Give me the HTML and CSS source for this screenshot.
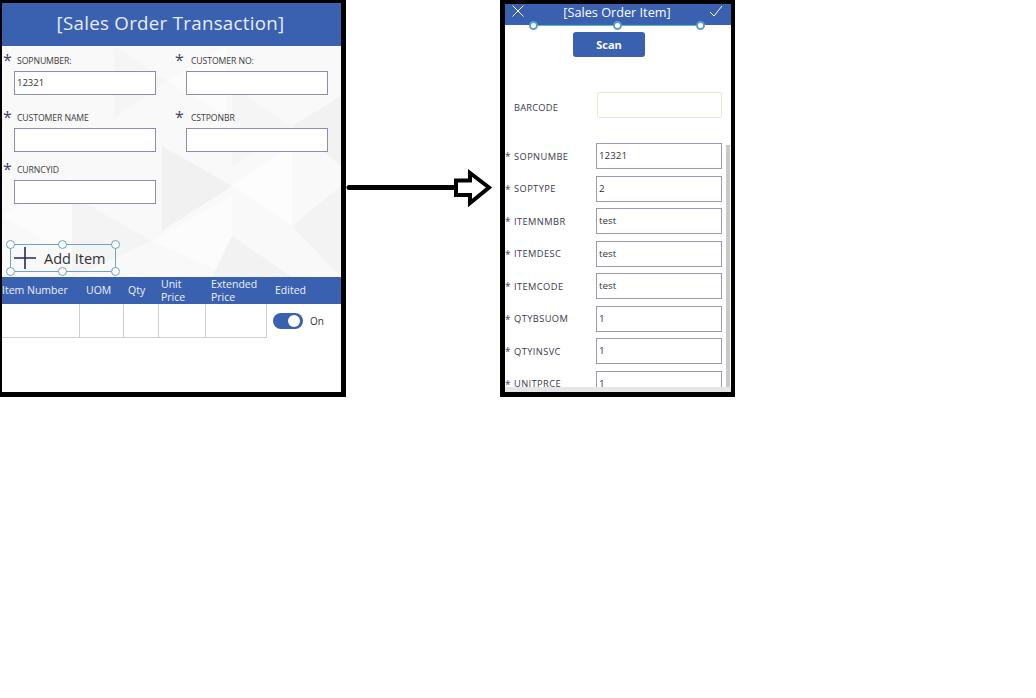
FILE: index.html
```html
<!DOCTYPE html>
<html lang="en">
<head>
<meta charset="utf-8">
<title>Sales Order</title>
<link rel="stylesheet" href="styles.css">
</head>
<body>
<div class="canvas">
  <section class="screen left">
    <header class="title-bar">[Sales Order Transaction]</header>
    <div class="form-area">
      <svg class="bg" viewBox="0 0 339 231" preserveAspectRatio="none" aria-hidden="true">
        <polygon points="0,0 339,0 339,231 0,231" fill="#f9f9fa"/>
        <polygon points="112,0 165,35 112,72" fill="#f5f5f6"/>
        <polygon points="165,35 225,0 225,70" fill="#fcfcfc"/>
        <polygon points="230,40 290,80 230,120" fill="#f5f5f6"/>
        <polygon points="290,80 339,50 339,120" fill="#f2f2f3"/>
        <polygon points="160,100 230,140 160,185" fill="#f1f1f2"/>
        <polygon points="230,140 290,100 290,180" fill="#fdfdfd"/>
        <polygon points="290,180 339,140 339,231" fill="#f3f3f4"/>
        <polygon points="0,170 70,130 70,210" fill="#fcfcfc"/>
        <polygon points="70,150 150,195 70,231" fill="#f4f4f5"/>
        <polygon points="150,195 230,150 230,231" fill="#fcfcfc"/>
        <polygon points="230,190 290,231 210,231" fill="#f2f2f3"/>
      </svg>
      <div class="field-grid">
        <div class="field">
          <div class="label-row"><span class="star">*</span><span class="label">SOPNUMBER:</span></div>
          <div class="text-input">12321</div>
        </div>
        <div class="field">
          <div class="label-row"><span class="star">*</span><span class="label">CUSTOMER NO:</span></div>
          <div class="text-input"></div>
        </div>
        <div class="field">
          <div class="label-row"><span class="star">*</span><span class="label">CUSTOMER NAME</span></div>
          <div class="text-input"></div>
        </div>
        <div class="field">
          <div class="label-row"><span class="star">*</span><span class="label">CSTPONBR</span></div>
          <div class="text-input"></div>
        </div>
        <div class="field short">
          <div class="label-row"><span class="star">*</span><span class="label">CURNCYID</span></div>
          <div class="text-input"></div>
        </div>
      </div>
      <div class="add-item">
        <svg class="plus" viewBox="0 0 24 24" aria-hidden="true"><path d="M12 1v22M1 12h22"/></svg>
        <span>Add Item</span>
        <i class="handle tl"></i><i class="handle tc"></i><i class="handle tr"></i>
        <i class="handle bl"></i><i class="handle bc"></i><i class="handle br"></i>
      </div>
    </div>
    <div class="table-head">
      <span class="col c1">Item Number</span>
      <span class="col c2">UOM</span>
      <span class="col c3">Qty</span>
      <span class="col c4">Unit Price</span>
      <span class="col c5">Extended Price</span>
      <span class="col c6">Edited</span>
    </div>
    <div class="table-row">
      <div class="cells">
        <span class="cell c1"></span>
        <span class="cell c2"></span>
        <span class="cell c3"></span>
        <span class="cell c4"></span>
        <span class="cell c5"></span>
      </div>
      <div class="toggle-wrap">
        <span class="toggle"><i class="knob"></i></span>
        <span class="toggle-text">On</span>
      </div>
    </div>
  </section>

  <svg class="arrow" viewBox="0 0 154 40" aria-hidden="true">
    <path class="shaft" d="M3 20.500H109"/>
    <path class="head" d="M110 13.500H124V6L143 20.500L124 36V28H110Z"/>
  </svg>

  <section class="screen right">
    <header class="item-bar">
      <svg class="bar-icon" viewBox="0 0 14 14" aria-hidden="true"><path d="M1.500 1.500L12.500 12.500M12.500 1.500L1.500 12.500"/></svg>
      <span class="item-title">[Sales Order Item]</span>
      <svg class="bar-icon" viewBox="0 0 14 14" aria-hidden="true"><path d="M1 8L5 12L13 2"/></svg>
      <i class="sel-line"></i>
      <i class="handle hl"></i><i class="handle hc"></i><i class="handle hr"></i>
    </header>
    <div class="scan-row"><button class="scan" type="button">Scan</button></div>
    <div class="barcode-row">
      <span class="item-label">BARCODE</span>
      <div class="barcode-input"></div>
    </div>
    <div class="scroll-area">
      <div class="item-list">
        <div class="item-row"><span class="mini-star">*</span><span class="item-label">SOPNUMBE</span><div class="item-input">12321</div></div>
        <div class="item-row"><span class="mini-star">*</span><span class="item-label">SOPTYPE</span><div class="item-input">2</div></div>
        <div class="item-row"><span class="mini-star">*</span><span class="item-label">ITEMNMBR</span><div class="item-input">test</div></div>
        <div class="item-row"><span class="mini-star">*</span><span class="item-label">ITEMDESC</span><div class="item-input">test</div></div>
        <div class="item-row"><span class="mini-star">*</span><span class="item-label">ITEMCODE</span><div class="item-input">test</div></div>
        <div class="item-row"><span class="mini-star">*</span><span class="item-label">QTYBSUOM</span><div class="item-input">1</div></div>
        <div class="item-row"><span class="mini-star">*</span><span class="item-label">QTYINSVC</span><div class="item-input">1</div></div>
        <div class="item-row"><span class="mini-star">*</span><span class="item-label">UNITPRCE</span><div class="item-input">1</div></div>
      </div>
      <div class="v-scroll"></div>
    </div>
    <div class="h-scroll"></div>
  </section>
</div>
</body>
</html>
```
FILE: styles.css
```css
* { box-sizing: border-box; }
html, body { margin: 0; padding: 0; background: #fff; }
body { width: 1036px; height: 698px; overflow: hidden; font-family: "Open Sans", "Noto Sans", sans-serif; color: #333; }
.canvas { display: flex; align-items: flex-start; }

.screen { height: 397px; background: #fff; border: solid #000; flex: none; display: flex; flex-direction: column; overflow: hidden; }
.left { width: 346px; border-width: 3px 5px 5px 2px; }
.right { width: 235px; border-width: 4px 4px 5px 5px; }

.title-bar { height: 43px; flex: none; background: #3a60b0; color: #e8edf7; font-size: 18.700px; line-height: 40px; text-align: center; letter-spacing: .3px; padding-right: 2px; }

.form-area { position: relative; height: 231px; flex: none; }
.bg { position: absolute; inset: 0; width: 100%; height: 100%; }
.field-grid { position: relative; display: grid; grid-template-columns: 162px 162px; grid-auto-rows: 57px; padding-top: 6px; }
.field { display: flex; flex-direction: column; }
.field.short { height: 52px; margin-top: -5px; }
.label-row { height: 19px; display: flex; align-items: flex-start; position: relative; }
.star { width: 15px; padding-left: 1px; font-size: 16px; line-height: 16px; color: #39455f; }
.label { font-size: 8.700px; line-height: 19px; color: #3b3b3b; letter-spacing: -.1px; }
.text-input { margin-left: 12px; width: 142px; height: 24px; background: #fff; border: 1px solid #8d8dad; font-size: 9.500px; line-height: 21px; padding-left: 2px; color: #333; }
.field:nth-child(even) .text-input { width: 142px; margin-left: 22px; }
.field:nth-child(even) .star { padding-left: 11px; width: 27px; }

.add-item { position: absolute; left: 8px; top: 198px; width: 106px; height: 28px; border: 1px solid #6fa3c6; display: flex; align-items: center; gap: 7px; padding-left: 2px; font-size: 14.500px; color: #333; }
.plus { width: 24px; height: 24px; flex: none; }
.plus path { fill: none; stroke: #232c55; stroke-width: 1.600; }
.handle { position: absolute; width: 9px; height: 9px; border-radius: 50%; background: #fff; border: 1.500px solid #6fa3c6; }
.tl { left: -5px; top: -5px; } .tc { left: 47px; top: -5px; } .tr { right: -5px; top: -5px; }
.bl { left: -5px; bottom: -5px; } .bc { left: 47px; bottom: -5px; } .br { right: -5px; bottom: -5px; }

.table-head { height: 27px; flex: none; background: #3a60b0; color: #eef1f8; display: flex; align-items: center; font-size: 10.500px; line-height: 13px; }
.col { display: block; }
.col.c1, .cell.c1 { width: 78px; }
.col.c2, .cell.c2 { width: 44px; }
.col.c3, .cell.c3 { width: 35px; }
.col.c4, .cell.c4 { width: 47px; }
.col.c5, .cell.c5 { width: 61px; }
.col.c1 { white-space: nowrap; }
.col.c2 { padding-left: 6px; }
.col.c3 { padding-left: 4px; }
.col.c4 { padding: 0 12px 0 2px; width: 50px; }
.col.c5 { padding-left: 2px; width: 66px; }
.table-row { flex: 1; display: flex; align-items: flex-start; }
.cells { display: flex; height: 34px; border-bottom: 1px solid #d0d0d0; border-right: 1px solid #d0d0d0; width: 265px; }
.cell { height: 33px; border-right: 1px solid #d0d0d0; flex: none; }
.cell.c5 { border-right: 0; }
.toggle-wrap { display: flex; align-items: center; gap: 7px; padding-left: 6px; height: 34px; }
.toggle { width: 30px; height: 16px; border-radius: 8px; background: #3a60b0; position: relative; display: block; }
.knob { position: absolute; right: 3px; top: 2px; width: 12px; height: 12px; border-radius: 50%; background: #fff; }
.toggle-text { font-size: 10px; color: #333; }

.arrow { width: 154px; height: 40px; flex: none; margin-top: 167px; }
.shaft { fill: none; stroke: #000; stroke-width: 5px; stroke-linecap: round; }
.head { fill: #fff; stroke: #000; stroke-width: 4px; stroke-linejoin: miter; }

.item-bar { position: relative; height: 21px; flex: none; background: #3a60b0; color: #fff; display: flex; align-items: center; justify-content: space-between; padding: 0 8px 6px 6px; }
.item-title { font-size: 12.700px; line-height: 14px; margin-left: 1px; margin-right: 1px; }
.bar-icon { width: 14px; height: 14px; margin-top: -2px; flex: none; }
.bar-icon path { fill: none; stroke: #fff; stroke-width: 1; }
.sel-line { position: absolute; left: 28px; width: 167px; bottom: -1px; height: 1.500px; background: #5fb8c8; }
.hl { left: 24px; bottom: -5px; } .hc { left: 108px; bottom: -5px; } .hr { left: 191px; bottom: -5px; }
.item-bar .handle { width: 9px; height: 9px; border-width: 2px; border-color: #5ea0c8; z-index: 2; }
.scan-row { height: 67px; flex: none; padding: 7px 0 0 68px; }
.scan { display: block; width: 72px; height: 25px; border: 0; border-radius: 3px; background: #3a60b0; color: #fff; font: 700 11px "Open Sans", sans-serif; padding: 0; }
.barcode-row { height: 51px; flex: none; display: flex; align-items: flex-start; padding-left: 9px; }
.barcode-row .item-label { width: 83px; line-height: 32px; }
.barcode-input { width: 125px; height: 26px; border: 1px solid #e8ebd2; border-radius: 2px; background: #fff; }
.scroll-area { position: relative; flex: 1; overflow: hidden; min-height: 0; }
.item-list { display: flex; flex-direction: column; gap: 6.500px; }
.item-row { display: flex; align-items: center; height: 26px; flex: none; }
.mini-star { width: 9px; font-size: 10px; line-height: 14px; color: #39455f; }
.item-label { font-size: 9.300px; color: #3a3a4a; letter-spacing: .2px; display: block; }
.item-row .item-label { width: 82px; letter-spacing: .4px; }
.item-input { width: 126px; height: 26px; border: 1px solid #9a9ab0; background: #fff; font-size: 9.800px; line-height: 24px; padding-left: 2px; color: #333; }
.v-scroll { position: absolute; right: 1px; top: 2px; bottom: 0; width: 4px; background: #c9c9c9; }
.h-scroll { height: 5px; flex: none; background: #e6e6e6; }
```
